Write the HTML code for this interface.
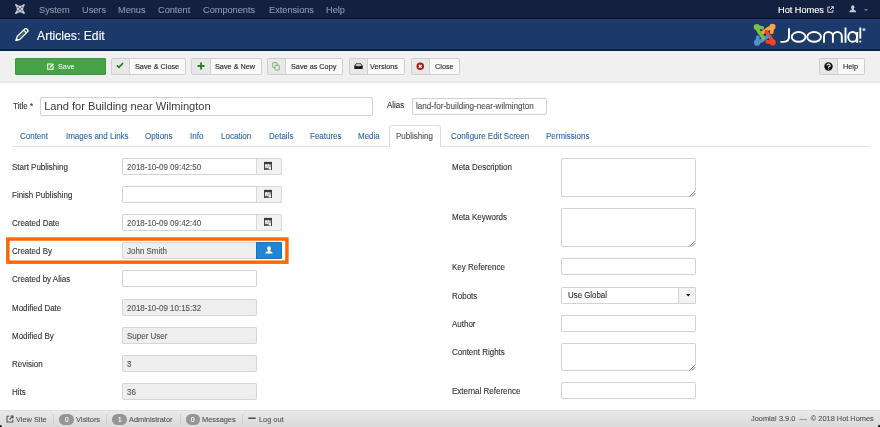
<!DOCTYPE html>
<html><head><meta charset="utf-8"><title>Articles: Edit</title>
<style>
html,body{margin:0;padding:0;}
body{width:880px;height:427px;overflow:hidden;position:relative;background:#fff;font-family:"Liberation Sans",sans-serif;}
.t{position:absolute;white-space:pre;-webkit-text-stroke:0.12px currentColor;}
.r{position:absolute;}
#wrap{position:absolute;left:-6px;top:-6px;width:892px;height:439px;filter:blur(0.3px);}
#inner{position:absolute;left:6px;top:6px;width:880px;height:427px;background:#fff;}
</style></head><body><div id="wrap"><div id="inner">
<div class="r" style="left:0px;top:0px;width:880.00px;height:18.00px;background:#13203f;"></div>
<div class="r" style="left:0px;top:17px;width:880.00px;height:1.00px;background:#101c36;"></div>
<div class="r" style="left:0px;top:18px;width:880.00px;height:1.00px;background:#0b1428;"></div>
<svg class="r" style="left:15px;top:4px" width="10" height="10" viewBox="0 0 10 10"><path d="M1.6 0.3 Q5 3.4 8.4 0.3 Q9.9 -0.6 9.7 1.6 Q6.6 5 9.7 8.4 Q10.6 9.9 8.4 9.7 Q5 6.6 1.6 9.7 Q-0.6 10.6 0.3 8.4 Q3.4 5 0.3 1.6 Q-0.6 -0.6 1.6 0.3 Z" fill="#c6cbd7"/><g fill="#13203f"><circle cx="5" cy="5" r="0.85"/><circle cx="3.1" cy="3.2" r="0.65"/><circle cx="6.9" cy="3.2" r="0.65"/><circle cx="3.1" cy="6.8" r="0.65"/><circle cx="6.9" cy="6.8" r="0.65"/></g></svg>
<div class="t" style="left:39.00px;top:3.63px;font-size:9.684px;line-height:11.62px;color:#8d96ab;font-weight:normal;transform:scaleX(0.95);transform-origin:0 0;">System</div>
<div class="t" style="left:82.00px;top:3.63px;font-size:9.684px;line-height:11.62px;color:#8d96ab;font-weight:normal;transform:scaleX(0.95);transform-origin:0 0;">Users</div>
<div class="t" style="left:118.00px;top:3.63px;font-size:9.684px;line-height:11.62px;color:#8d96ab;font-weight:normal;transform:scaleX(0.95);transform-origin:0 0;">Menus</div>
<div class="t" style="left:158.20px;top:3.63px;font-size:9.684px;line-height:11.62px;color:#8d96ab;font-weight:normal;transform:scaleX(0.95);transform-origin:0 0;">Content</div>
<div class="t" style="left:203.10px;top:3.63px;font-size:9.684px;line-height:11.62px;color:#8d96ab;font-weight:normal;transform:scaleX(0.95);transform-origin:0 0;">Components</div>
<div class="t" style="left:268.50px;top:3.63px;font-size:9.684px;line-height:11.62px;color:#8d96ab;font-weight:normal;transform:scaleX(0.95);transform-origin:0 0;">Extensions</div>
<div class="t" style="left:325.50px;top:3.63px;font-size:9.684px;line-height:11.62px;color:#8d96ab;font-weight:normal;transform:scaleX(0.95);transform-origin:0 0;">Help</div>
<div class="t" style="left:777.90px;top:3.63px;font-size:9.684px;line-height:11.62px;color:#ffffff;font-weight:normal;transform:scaleX(0.95);transform-origin:0 0;">Hot Homes</div>
<svg class="r" style="left:826.8px;top:5.8px" width="7" height="7" viewBox="0 0 7 7"><path d="M3 1.1 H0.8 V6.2 H5.9 V4" stroke="#dfe3ea" stroke-width="0.95" fill="none"/><path d="M2.9 4.1 L6.3 0.7 M4.1 0.7 H6.3 V2.9" stroke="#dfe3ea" stroke-width="0.95" fill="none"/></svg>
<svg class="r" style="left:849px;top:5px" width="7.5" height="7.5" viewBox="0 0 8 8"><ellipse cx="4" cy="2.4" rx="1.8" ry="2.1" fill="#c4c9d4"/><path d="M2.9 4.1 L2.7 5.2 C1 5.6 0.4 6.2 0.3 7.8 H7.7 C7.6 6.2 7 5.6 5.3 5.2 L5.1 4.1 Z" fill="#c4c9d4"/></svg>
<svg class="r" style="left:863.5px;top:8.5px" width="4" height="3" viewBox="0 0 4 3"><path d="M0 0 H4 L2 2.5Z" fill="#6f7890"/></svg>
<div class="r" style="left:0px;top:19px;width:880.00px;height:30.00px;background:#1b3a6a;"></div>
<div class="r" style="left:0px;top:19px;width:880.00px;height:2.50px;background:#1d3c71;"></div>
<div class="r" style="left:0px;top:48.5px;width:880.00px;height:2.50px;background:#082150;"></div>
<svg class="r" style="left:15px;top:27.5px" width="13.5" height="13.5" viewBox="0 0 13 13"><path d="M0.9 12.1 L2.1 8.3 L9.5 0.9 A1.3 1.3 0 0 1 11.3 0.9 L12.1 1.7 A1.3 1.3 0 0 1 12.1 3.5 L4.7 10.9 Z" fill="#1b3a6a" stroke="#fff" stroke-width="1.35" stroke-linejoin="round"/><path d="M8.4 2 L11 4.6" stroke="#fff" stroke-width="1.1"/><path d="M0.7 12.3 L1.5 9.6 L3.4 11.5 Z" fill="#fff"/><path d="M3.6 9.4 L9.6 3.4" stroke="#fff" stroke-width="0.6" opacity="0.5"/></svg>
<div class="t" style="left:36.80px;top:27.85px;font-size:12.842px;line-height:15.41px;color:#ffffff;font-weight:normal;transform:scaleX(0.95);transform-origin:0 0;">Articles: Edit</div>
<svg class="r" style="left:751.2px;top:21px" width="27.5" height="27.5" viewBox="0 0 30 30"><g transform="rotate(0 15 15)"><path d="M23.4 6.4 L22.6 12.2 M23.4 6.4 L18.6 8.4 L11.6 13.4" stroke="#f9a541" stroke-width="4.0" stroke-linecap="round" stroke-linejoin="round" fill="none"/><circle cx="23.4" cy="6.4" r="3.4" fill="#f9a541"/></g><g transform="rotate(90 15 15)"><path d="M23.4 6.4 L22.6 12.2 M23.4 6.4 L18.6 8.4 L11.6 13.4" stroke="#f44321" stroke-width="4.0" stroke-linecap="round" stroke-linejoin="round" fill="none"/><circle cx="23.4" cy="6.4" r="3.4" fill="#f44321"/></g><g transform="rotate(180 15 15)"><path d="M23.4 6.4 L22.6 12.2 M23.4 6.4 L18.6 8.4 L11.6 13.4" stroke="#5091cd" stroke-width="4.0" stroke-linecap="round" stroke-linejoin="round" fill="none"/><circle cx="23.4" cy="6.4" r="3.4" fill="#5091cd"/></g><g transform="rotate(270 15 15)"><path d="M23.4 6.4 L22.6 12.2 M23.4 6.4 L18.6 8.4 L11.6 13.4" stroke="#7ac143" stroke-width="4.0" stroke-linecap="round" stroke-linejoin="round" fill="none"/><circle cx="23.4" cy="6.4" r="3.4" fill="#7ac143"/></g></svg>
<svg class="r" style="left:776px;top:22px" width="92" height="26" viewBox="0 0 92 26"><g fill="none" stroke="#fff" stroke-width="1.9" stroke-linecap="butt">
<path d="M13 6.3 V14.6 Q13 19.9 8 19.9 H4.4"/>
<ellipse cx="22.6" cy="14.9" rx="6.9" ry="4.9"/>
<ellipse cx="38.1" cy="14.9" rx="6.9" ry="4.9"/>
<path d="M48 20.8 V14.3 A4.4 4.2 0 0 1 56.9 14.3 V20.8 M56.9 14.3 A4.4 4.2 0 0 1 65.8 14.3 V20.8"/>
<path d="M69.5 5.5 V20.8"/>
<ellipse cx="76.6" cy="14.9" rx="4.4" ry="4.9"/>
<path d="M81.2 10 V20.8"/>
<path d="M84.3 5.5 V16.6"/>
</g><circle cx="84.3" cy="19.6" r="1.1" fill="#fff"/><circle cx="88" cy="7.6" r="1.6" fill="#b8c0cf"/></svg>
<div class="r" style="left:0px;top:51px;width:880.00px;height:31.00px;background:#f0f0f0;"></div>
<div class="r" style="left:0px;top:81px;width:880.00px;height:2.00px;background:#e7e7e7;"></div>
<div class="r" style="left:15px;top:58px;width:91.00px;height:17.00px;background:#46a447;border-radius:2px;box-shadow:inset 0 0 0 1px #3d953e;"></div>
<svg class="r" style="left:47.3px;top:62.8px" width="7.2" height="7" viewBox="0 0 7.2 7"><path d="M4.6 0.9 H0.7 V6.3 H6.1 V3.2" fill="none" stroke="#fff" stroke-width="1.05"/><path d="M2.6 4.6 L2.9 3.4 L6 0.3 L7 1.3 L3.9 4.4 Z" fill="#fff"/></svg>
<div class="t" style="left:58.20px;top:62.33px;font-size:7.684px;line-height:9.22px;color:#ffffff;font-weight:normal;transform:scaleX(0.95);transform-origin:0 0;-webkit-text-stroke:0;">Save</div>
<div class="r" style="left:111.25px;top:58px;width:74.25px;height:16.80px;background:#f9f9f9;border-radius:2px;box-shadow:inset 0 0 0 1px #cfcfcf;"></div>
<div class="r" style="left:112.25px;top:59px;width:17.00px;height:14.80px;background:#e8e8e8;border-right:1px solid #d0d0d0;"></div>
<div class="t" style="left:134.95px;top:62.33px;font-size:7.684px;line-height:9.22px;color:#262626;font-weight:normal;transform:scaleX(0.95);transform-origin:0 0;">Save & Close</div>
<div class="r" style="left:191.25px;top:58px;width:70.50px;height:16.80px;background:#f9f9f9;border-radius:2px;box-shadow:inset 0 0 0 1px #cfcfcf;"></div>
<div class="r" style="left:192.25px;top:59px;width:17.25px;height:14.80px;background:#e8e8e8;border-right:1px solid #d0d0d0;"></div>
<div class="t" style="left:214.95px;top:62.33px;font-size:7.684px;line-height:9.22px;color:#262626;font-weight:normal;transform:scaleX(0.95);transform-origin:0 0;">Save & New</div>
<div class="r" style="left:267.2px;top:58px;width:76.05px;height:16.80px;background:#f9f9f9;border-radius:2px;box-shadow:inset 0 0 0 1px #cfcfcf;"></div>
<div class="r" style="left:268.2px;top:59px;width:16.55px;height:14.80px;background:#e8e8e8;border-right:1px solid #d0d0d0;"></div>
<div class="t" style="left:291.20px;top:62.33px;font-size:7.684px;line-height:9.22px;color:#262626;font-weight:normal;transform:scaleX(0.95);transform-origin:0 0;">Save as Copy</div>
<div class="r" style="left:349px;top:58px;width:56.25px;height:16.80px;background:#f9f9f9;border-radius:2px;box-shadow:inset 0 0 0 1px #cfcfcf;"></div>
<div class="r" style="left:350px;top:59px;width:17.00px;height:14.80px;background:#e8e8e8;border-right:1px solid #d0d0d0;"></div>
<div class="t" style="left:370.45px;top:62.33px;font-size:7.684px;line-height:9.22px;color:#262626;font-weight:normal;transform:scaleX(0.95);transform-origin:0 0;">Versions</div>
<div class="r" style="left:410.5px;top:58px;width:49.50px;height:16.80px;background:#f9f9f9;border-radius:2px;box-shadow:inset 0 0 0 1px #cfcfcf;"></div>
<div class="r" style="left:411.5px;top:59px;width:17.00px;height:14.80px;background:#e8e8e8;border-right:1px solid #d0d0d0;"></div>
<div class="t" style="left:434.50px;top:62.33px;font-size:7.684px;line-height:9.22px;color:#262626;font-weight:normal;transform:scaleX(0.95);transform-origin:0 0;">Close</div>
<div class="r" style="left:819.2px;top:58px;width:45.80px;height:16.80px;background:#f9f9f9;border-radius:2px;box-shadow:inset 0 0 0 1px #cfcfcf;"></div>
<div class="r" style="left:820.2px;top:59px;width:17.30px;height:14.80px;background:#e8e8e8;border-right:1px solid #d0d0d0;"></div>
<div class="t" style="left:843.20px;top:62.33px;font-size:7.684px;line-height:9.22px;color:#262626;font-weight:normal;transform:scaleX(0.95);transform-origin:0 0;">Help</div>
<svg class="r" style="left:116.2px;top:62.2px" width="8" height="7" viewBox="0 0 8 7"><path d="M0.9 3.3 L3 5.3 L7 1.1" fill="none" stroke="#1f7a24" stroke-width="1.6"/></svg>
<svg class="r" style="left:196.5px;top:62px" width="8" height="8" viewBox="0 0 8 8"><path d="M4 0.5 V7.5 M0.5 4 H7.5" stroke="#27812c" stroke-width="1.8"/></svg>
<svg class="r" style="left:272px;top:62px" width="8" height="9" viewBox="0 0 8 9"><rect x="0.7" y="0.7" width="4.3" height="4.8" rx="0.6" fill="none" stroke="#5aad5c" stroke-width="0.8"/><rect x="3" y="3.3" width="4.3" height="4.8" rx="0.6" fill="#e8e8e8" stroke="#5aad5c" stroke-width="0.8"/></svg>
<svg class="r" style="left:354px;top:63px" width="9" height="6.5" viewBox="0 0 9 6.5"><path d="M2 0.8 H7 L8.4 3.2 H0.6 Z" fill="#fff" stroke="#222" stroke-width="0.9"/><path d="M0.3 3 H3 Q4.5 4.4 6 3 H8.7 V6 H0.3 Z" fill="#1a1a1a"/></svg>
<svg class="r" style="left:416px;top:62.2px" width="9" height="9" viewBox="0 0 9 9"><circle cx="4.25" cy="4.3" r="3.8" fill="#a51f18"/><path d="M2.8 2.85 L5.7 5.75 M5.7 2.85 L2.8 5.75" stroke="#fff" stroke-width="1.2"/></svg>
<svg class="r" style="left:824px;top:62px" width="9" height="9" viewBox="0 0 9 9"><circle cx="4.5" cy="4.5" r="4.2" fill="#111"/><path d="M3.1 3.5 A1.5 1.4 0 1 1 4.9 4.8 C4.5 5 4.5 5.3 4.5 5.8" fill="none" stroke="#fff" stroke-width="1.1"/><circle cx="4.5" cy="7" r="0.6" fill="#fff"/></svg>
<div class="t" style="left:12.50px;top:100.73px;font-size:8.421px;line-height:10.11px;color:#333333;font-weight:normal;transform:scaleX(0.95);transform-origin:0 0;">Title *</div>
<div class="r" style="left:40px;top:97px;width:332.50px;height:19.00px;background:#fff;border-radius:2px;box-shadow:inset 0 0 0 1px #d2d2d2;"></div>
<div class="t" style="left:44.20px;top:100.09px;font-size:11.1px;line-height:13.32px;color:#3a3a3a;font-weight:normal;-webkit-text-stroke:0;">Land for Building near Wilmington</div>
<div class="t" style="left:386.70px;top:100.33px;font-size:8.421px;line-height:10.11px;color:#333333;font-weight:normal;transform:scaleX(0.95);transform-origin:0 0;">Alias</div>
<div class="r" style="left:412.2px;top:98px;width:134.50px;height:17.20px;background:#fff;border-radius:2px;box-shadow:inset 0 0 0 1px #d2d2d2;"></div>
<div class="t" style="left:416.30px;top:101.33px;font-size:8.526px;line-height:10.23px;color:#505050;font-weight:normal;transform:scaleX(0.95);transform-origin:0 0;">land-for-building-near-wilmington</div>
<div class="r" style="left:12px;top:146px;width:856.50px;height:1.00px;background:#e2e2e2;"></div>
<div class="r" style="left:389.25px;top:125px;width:52.05px;height:22.00px;background:#fff;border:1px solid #dedede;border-bottom:none;border-radius:3px 3px 0 0;box-sizing:border-box;"></div>
<div class="t" style="left:20.05px;top:130.93px;font-size:8.421px;line-height:10.11px;color:#3169ab;font-weight:normal;transform:scaleX(0.95);transform-origin:0 0;">Content</div>
<div class="t" style="left:65.80px;top:130.93px;font-size:8.421px;line-height:10.11px;color:#3169ab;font-weight:normal;transform:scaleX(0.95);transform-origin:0 0;">Images and Links</div>
<div class="t" style="left:144.80px;top:130.93px;font-size:8.421px;line-height:10.11px;color:#3169ab;font-weight:normal;transform:scaleX(0.95);transform-origin:0 0;">Options</div>
<div class="t" style="left:189.80px;top:130.93px;font-size:8.421px;line-height:10.11px;color:#3169ab;font-weight:normal;transform:scaleX(0.95);transform-origin:0 0;">Info</div>
<div class="t" style="left:220.55px;top:130.93px;font-size:8.421px;line-height:10.11px;color:#3169ab;font-weight:normal;transform:scaleX(0.95);transform-origin:0 0;">Location</div>
<div class="t" style="left:268.55px;top:130.93px;font-size:8.421px;line-height:10.11px;color:#3169ab;font-weight:normal;transform:scaleX(0.95);transform-origin:0 0;">Details</div>
<div class="t" style="left:309.80px;top:130.93px;font-size:8.421px;line-height:10.11px;color:#3169ab;font-weight:normal;transform:scaleX(0.95);transform-origin:0 0;">Features</div>
<div class="t" style="left:357.50px;top:130.93px;font-size:8.421px;line-height:10.11px;color:#3169ab;font-weight:normal;transform:scaleX(0.95);transform-origin:0 0;">Media</div>
<div class="t" style="left:450.55px;top:130.93px;font-size:8.421px;line-height:10.11px;color:#3169ab;font-weight:normal;transform:scaleX(0.95);transform-origin:0 0;">Configure Edit Screen</div>
<div class="t" style="left:545.55px;top:130.93px;font-size:8.421px;line-height:10.11px;color:#3169ab;font-weight:normal;transform:scaleX(0.95);transform-origin:0 0;">Permissions</div>
<div class="t" style="left:396.30px;top:130.73px;font-size:8.421px;line-height:10.11px;color:#555555;font-weight:normal;transform:scaleX(0.95);transform-origin:0 0;">Publishing</div>
<div class="t" style="left:11.70px;top:161.83px;font-size:8.421px;line-height:10.11px;color:#333333;font-weight:normal;transform:scaleX(0.95);transform-origin:0 0;">Start Publishing</div>
<div class="r" style="left:122px;top:158px;width:160.00px;height:17.00px;background:#fff;border-radius:2px;box-shadow:inset 0 0 0 1px #d2d2d2;"></div>
<div class="r" style="left:256px;top:158px;width:26.00px;height:17.00px;background:#f2f2f2;border-radius:0 2px 2px 0;box-shadow:inset 0 0 0 1px #d8d8d8;"></div>
<svg class="r" style="left:264px;top:160.60px" width="8" height="9.5" viewBox="0 0 8 9.5"><path d="M0 1 Q2 0.4 4 1 Q6 0.4 8 1 V9.3 H0 Z" fill="#3a3a3a"/><rect x="0.9" y="3.3" width="6.2" height="5.2" fill="#b4b4b4"/><g fill="#f4f4f4"><rect x="1" y="3.4" width="2.4" height="1.4"/><rect x="3.9" y="3.4" width="1.4" height="1.4"/><rect x="1" y="5.4" width="1.4" height="1.3"/><rect x="2.9" y="5.4" width="1.4" height="1.3"/><rect x="4.9" y="6.2" width="2.1" height="2.2"/></g><g fill="#555"><rect x="1" y="7.1" width="3.4" height="1.3"/></g></svg>
<div class="t" style="left:126.60px;top:161.83px;font-size:8.421px;line-height:10.11px;color:#555555;font-weight:normal;transform:scaleX(0.95);transform-origin:0 0;">2018-10-09 09:42:50</div>
<div class="t" style="left:11.70px;top:189.83px;font-size:8.421px;line-height:10.11px;color:#333333;font-weight:normal;transform:scaleX(0.95);transform-origin:0 0;">Finish Publishing</div>
<div class="r" style="left:122px;top:186px;width:160.00px;height:17.00px;background:#fff;border-radius:2px;box-shadow:inset 0 0 0 1px #d2d2d2;"></div>
<div class="r" style="left:256px;top:186px;width:26.00px;height:17.00px;background:#f2f2f2;border-radius:0 2px 2px 0;box-shadow:inset 0 0 0 1px #d8d8d8;"></div>
<svg class="r" style="left:264px;top:188.60px" width="8" height="9.5" viewBox="0 0 8 9.5"><path d="M0 1 Q2 0.4 4 1 Q6 0.4 8 1 V9.3 H0 Z" fill="#3a3a3a"/><rect x="0.9" y="3.3" width="6.2" height="5.2" fill="#b4b4b4"/><g fill="#f4f4f4"><rect x="1" y="3.4" width="2.4" height="1.4"/><rect x="3.9" y="3.4" width="1.4" height="1.4"/><rect x="1" y="5.4" width="1.4" height="1.3"/><rect x="2.9" y="5.4" width="1.4" height="1.3"/><rect x="4.9" y="6.2" width="2.1" height="2.2"/></g><g fill="#555"><rect x="1" y="7.1" width="3.4" height="1.3"/></g></svg>
<div class="t" style="left:11.70px;top:217.83px;font-size:8.421px;line-height:10.11px;color:#333333;font-weight:normal;transform:scaleX(0.95);transform-origin:0 0;">Created Date</div>
<div class="r" style="left:122px;top:214px;width:160.00px;height:17.00px;background:#fff;border-radius:2px;box-shadow:inset 0 0 0 1px #d2d2d2;"></div>
<div class="r" style="left:256px;top:214px;width:26.00px;height:17.00px;background:#f2f2f2;border-radius:0 2px 2px 0;box-shadow:inset 0 0 0 1px #d8d8d8;"></div>
<svg class="r" style="left:264px;top:216.60px" width="8" height="9.5" viewBox="0 0 8 9.5"><path d="M0 1 Q2 0.4 4 1 Q6 0.4 8 1 V9.3 H0 Z" fill="#3a3a3a"/><rect x="0.9" y="3.3" width="6.2" height="5.2" fill="#b4b4b4"/><g fill="#f4f4f4"><rect x="1" y="3.4" width="2.4" height="1.4"/><rect x="3.9" y="3.4" width="1.4" height="1.4"/><rect x="1" y="5.4" width="1.4" height="1.3"/><rect x="2.9" y="5.4" width="1.4" height="1.3"/><rect x="4.9" y="6.2" width="2.1" height="2.2"/></g><g fill="#555"><rect x="1" y="7.1" width="3.4" height="1.3"/></g></svg>
<div class="t" style="left:126.60px;top:217.83px;font-size:8.421px;line-height:10.11px;color:#555555;font-weight:normal;transform:scaleX(0.95);transform-origin:0 0;">2018-10-09 09:42:40</div>
<div class="t" style="left:11.70px;top:245.83px;font-size:8.421px;line-height:10.11px;color:#333333;font-weight:normal;transform:scaleX(0.95);transform-origin:0 0;">Created By</div>
<div class="r" style="left:122px;top:242px;width:134.50px;height:17.00px;background:#eeeeee;border-radius:2px 0 0 2px;box-shadow:inset 0 0 0 1px #d6d6d6;"></div>
<div class="r" style="left:256.25px;top:242px;width:25.75px;height:17.00px;background:#2384d3;border-radius:0 2px 2px 0;box-shadow:inset 0 0 0 1px #1d72bd;"></div>
<svg class="r" style="left:264.5px;top:245.60px" width="8" height="8" viewBox="0 0 8 8"><ellipse cx="4" cy="2.6" rx="1.9" ry="2.3" fill="#fff"/><path d="M2.9 4.4 L2.6 5.6 C1 5.9 0.4 6.4 0.3 7.6 H7.7 C7.6 6.4 7 5.9 5.4 5.6 L5.1 4.4 Z" fill="#fff"/></svg>
<div class="t" style="left:126.60px;top:245.83px;font-size:8.421px;line-height:10.11px;color:#555555;font-weight:normal;transform:scaleX(0.95);transform-origin:0 0;">John Smith</div>
<div class="t" style="left:11.70px;top:273.83px;font-size:8.421px;line-height:10.11px;color:#333333;font-weight:normal;transform:scaleX(0.95);transform-origin:0 0;">Created by Alias</div>
<div class="r" style="left:122px;top:270px;width:134.60px;height:17.00px;background:#fff;border-radius:2px;box-shadow:inset 0 0 0 1px #d2d2d2;"></div>
<div class="t" style="left:11.70px;top:302.83px;font-size:8.421px;line-height:10.11px;color:#333333;font-weight:normal;transform:scaleX(0.95);transform-origin:0 0;">Modified Date</div>
<div class="r" style="left:122px;top:299px;width:134.60px;height:17.00px;background:#eeeeee;border-radius:2px;box-shadow:inset 0 0 0 1px #d6d6d6;"></div>
<div class="t" style="left:126.60px;top:302.83px;font-size:8.421px;line-height:10.11px;color:#555555;font-weight:normal;transform:scaleX(0.95);transform-origin:0 0;">2018-10-09 10:15:32</div>
<div class="t" style="left:11.70px;top:330.83px;font-size:8.421px;line-height:10.11px;color:#333333;font-weight:normal;transform:scaleX(0.95);transform-origin:0 0;">Modified By</div>
<div class="r" style="left:122px;top:327px;width:134.60px;height:17.00px;background:#eeeeee;border-radius:2px;box-shadow:inset 0 0 0 1px #d6d6d6;"></div>
<div class="t" style="left:126.60px;top:330.83px;font-size:8.421px;line-height:10.11px;color:#555555;font-weight:normal;transform:scaleX(0.95);transform-origin:0 0;">Super User</div>
<div class="t" style="left:11.70px;top:358.83px;font-size:8.421px;line-height:10.11px;color:#333333;font-weight:normal;transform:scaleX(0.95);transform-origin:0 0;">Revision</div>
<div class="r" style="left:122px;top:355px;width:134.60px;height:17.00px;background:#eeeeee;border-radius:2px;box-shadow:inset 0 0 0 1px #d6d6d6;"></div>
<div class="t" style="left:126.60px;top:358.83px;font-size:8.421px;line-height:10.11px;color:#555555;font-weight:normal;transform:scaleX(0.95);transform-origin:0 0;">3</div>
<div class="t" style="left:11.70px;top:386.83px;font-size:8.421px;line-height:10.11px;color:#333333;font-weight:normal;transform:scaleX(0.95);transform-origin:0 0;">Hits</div>
<div class="r" style="left:122px;top:383px;width:134.60px;height:17.00px;background:#eeeeee;border-radius:2px;box-shadow:inset 0 0 0 1px #d6d6d6;"></div>
<div class="t" style="left:126.60px;top:386.83px;font-size:8.421px;line-height:10.11px;color:#555555;font-weight:normal;transform:scaleX(0.95);transform-origin:0 0;">36</div>
<svg class="r" style="left:0;top:230px" width="300" height="40" viewBox="0 230 300 40"><rect x="7.83" y="239.03" width="279.1" height="23.15" fill="none" stroke="#ff6600" stroke-width="3.45"/></svg>
<div class="t" style="left:451.70px;top:161.63px;font-size:8.421px;line-height:10.11px;color:#333333;font-weight:normal;transform:scaleX(0.95);transform-origin:0 0;">Meta Description</div>
<div class="r" style="left:561px;top:158px;width:135.00px;height:39.00px;background:#fff;border-radius:2px;box-shadow:inset 0 0 0 1px #d2d2d2;"></div>
<svg class="r" style="left:688px;top:189px" width="8" height="8" viewBox="0 0 8 8"><path d="M8 2 V8 H2 Z" fill="#fff"/><path d="M1.6 7.4 L6.8 2.2 M3.8 7.6 L7.4 4" stroke="#707070" stroke-width="0.9"/></svg>
<div class="t" style="left:451.70px;top:211.63px;font-size:8.421px;line-height:10.11px;color:#333333;font-weight:normal;transform:scaleX(0.95);transform-origin:0 0;">Meta Keywords</div>
<div class="r" style="left:561px;top:208px;width:135.00px;height:39.00px;background:#fff;border-radius:2px;box-shadow:inset 0 0 0 1px #d2d2d2;"></div>
<svg class="r" style="left:688px;top:239px" width="8" height="8" viewBox="0 0 8 8"><path d="M8 2 V8 H2 Z" fill="#fff"/><path d="M1.6 7.4 L6.8 2.2 M3.8 7.6 L7.4 4" stroke="#707070" stroke-width="0.9"/></svg>
<div class="t" style="left:451.70px;top:261.63px;font-size:8.421px;line-height:10.11px;color:#333333;font-weight:normal;transform:scaleX(0.95);transform-origin:0 0;">Key Reference</div>
<div class="r" style="left:561px;top:258px;width:135.00px;height:17.00px;background:#fff;border-radius:2px;box-shadow:inset 0 0 0 1px #d2d2d2;"></div>
<div class="t" style="left:451.70px;top:290.63px;font-size:8.421px;line-height:10.11px;color:#333333;font-weight:normal;transform:scaleX(0.95);transform-origin:0 0;">Robots</div>
<div class="r" style="left:561px;top:287px;width:135.00px;height:17.00px;background:#fff;border-radius:2px;box-shadow:inset 0 0 0 1px #d2d2d2;"></div>
<div class="r" style="left:678px;top:287px;width:18.00px;height:17.00px;background:#f3f3f3;border-radius:0 2px 2px 0;box-shadow:inset 0 0 0 1px #d2d2d2;"></div>
<svg class="r" style="left:685.5px;top:293.90px" width="4.5" height="3" viewBox="0 0 4.5 3"><path d="M0 0 H4.5 L2.25 2.6Z" fill="#111"/></svg>
<div class="t" style="left:567.60px;top:290.13px;font-size:8.316px;line-height:9.98px;color:#2e2e2e;font-weight:normal;transform:scaleX(0.95);transform-origin:0 0;">Use Global</div>
<div class="t" style="left:451.70px;top:318.63px;font-size:8.421px;line-height:10.11px;color:#333333;font-weight:normal;transform:scaleX(0.95);transform-origin:0 0;">Author</div>
<div class="r" style="left:561px;top:315px;width:135.00px;height:17.00px;background:#fff;border-radius:2px;box-shadow:inset 0 0 0 1px #d2d2d2;"></div>
<div class="t" style="left:451.70px;top:346.63px;font-size:8.421px;line-height:10.11px;color:#333333;font-weight:normal;transform:scaleX(0.95);transform-origin:0 0;">Content Rights</div>
<div class="r" style="left:561px;top:343px;width:135.00px;height:28.00px;background:#fff;border-radius:2px;box-shadow:inset 0 0 0 1px #d2d2d2;"></div>
<svg class="r" style="left:688px;top:363px" width="8" height="8" viewBox="0 0 8 8"><path d="M8 2 V8 H2 Z" fill="#fff"/><path d="M1.6 7.4 L6.8 2.2 M3.8 7.6 L7.4 4" stroke="#707070" stroke-width="0.9"/></svg>
<div class="t" style="left:451.70px;top:385.63px;font-size:8.421px;line-height:10.11px;color:#333333;font-weight:normal;transform:scaleX(0.95);transform-origin:0 0;">External Reference</div>
<div class="r" style="left:561px;top:382px;width:135.00px;height:17.00px;background:#fff;border-radius:2px;box-shadow:inset 0 0 0 1px #d2d2d2;"></div>
<div class="r" style="left:0px;top:409.5px;width:880.00px;height:1.00px;background:#dedede;"></div>
<div class="r" style="left:0px;top:410.5px;width:880.00px;height:16.50px;background:linear-gradient(#e9e9e9,#d9d9d9);"></div>
<svg class="r" style="left:6px;top:415px" width="8" height="8" viewBox="0 0 8 8"><path d="M3.2 1.2 H1 V7 H6.8 V4.8" stroke="#555" stroke-width="1.1" fill="none"/><path d="M3.4 4.6 L7 1 M4.4 1 H7 V3.6" stroke="#555" stroke-width="1.1" fill="none"/></svg>
<div class="t" style="left:15.90px;top:414.93px;font-size:7.789px;line-height:9.35px;color:#555555;font-weight:normal;transform:scaleX(0.95);transform-origin:0 0;">View Site</div>
<div class="r" style="left:52.8px;top:414px;width:1.00px;height:10.00px;background:#d0d0d0;"></div>
<div class="r" style="left:106.2px;top:414px;width:1.00px;height:10.00px;background:#d0d0d0;"></div>
<div class="r" style="left:179.5px;top:414px;width:1.00px;height:10.00px;background:#d0d0d0;"></div>
<div class="r" style="left:242.2px;top:414px;width:1.00px;height:10.00px;background:#d0d0d0;"></div>
<div class="r" style="left:59.25px;top:413.5px;width:14.25px;height:11.00px;background:#959595;border-radius:6px;"></div>
<div class="t" style="left:64.58px;top:415.62px;font-size:6.842px;line-height:8.21px;color:#ffffff;font-weight:normal;transform:scaleX(0.95);transform-origin:0 0;">0</div>
<div class="r" style="left:112.4px;top:413.5px;width:14.90px;height:11.00px;background:#959595;border-radius:6px;"></div>
<div class="t" style="left:118.05px;top:415.62px;font-size:6.842px;line-height:8.21px;color:#ffffff;font-weight:normal;transform:scaleX(0.95);transform-origin:0 0;">1</div>
<div class="r" style="left:185.6px;top:413.5px;width:14.70px;height:11.00px;background:#959595;border-radius:6px;"></div>
<div class="t" style="left:191.15px;top:415.62px;font-size:6.842px;line-height:8.21px;color:#ffffff;font-weight:normal;transform:scaleX(0.95);transform-origin:0 0;">0</div>
<div class="t" style="left:75.50px;top:414.93px;font-size:7.789px;line-height:9.35px;color:#555555;font-weight:normal;transform:scaleX(0.95);transform-origin:0 0;">Visitors</div>
<div class="t" style="left:128.70px;top:414.93px;font-size:7.789px;line-height:9.35px;color:#555555;font-weight:normal;transform:scaleX(0.95);transform-origin:0 0;">Administrator</div>
<div class="t" style="left:202.10px;top:414.93px;font-size:7.789px;line-height:9.35px;color:#555555;font-weight:normal;transform:scaleX(0.95);transform-origin:0 0;">Messages</div>
<svg class="r" style="left:248px;top:416px" width="8" height="4" viewBox="0 0 8 4"><path d="M0.3 2.2 H7.7" stroke="#333" stroke-width="1.3"/></svg>
<div class="t" style="left:258.70px;top:414.93px;font-size:7.789px;line-height:9.35px;color:#555555;font-weight:normal;transform:scaleX(0.95);transform-origin:0 0;">Log out</div>
<div class="t" style="left:750.50px;top:414.23px;font-size:7.789px;line-height:9.35px;color:#555555;font-weight:normal;transform:scaleX(0.95);transform-origin:0 0;">Joomla! 3.9.0 &nbsp;&mdash;&nbsp; &copy; 2018 Hot Homes</div>
<svg class="r" style="left:0;top:423px" width="880" height="4" viewBox="0 423 880 4"><circle cx="0" cy="427" r="2" fill="#111"/><circle cx="880" cy="427" r="2.2" fill="#111"/></svg>
</div></div></body></html>
